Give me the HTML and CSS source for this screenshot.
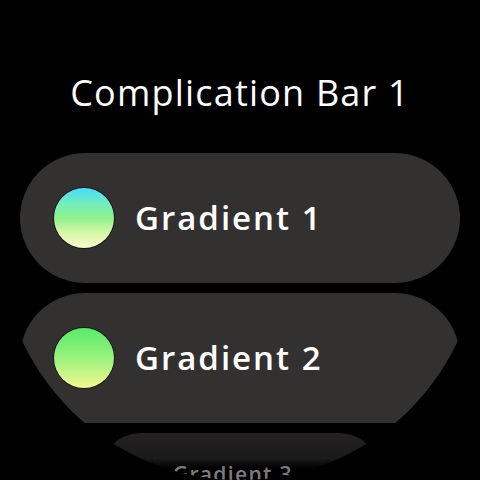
FILE: index.html
```html
<!DOCTYPE html>
<html>
<head>
<meta charset="utf-8">
<link rel="stylesheet" href="styles.css">
</head>
<body>
<div class="screen">
  <h1 class="title">Complication Bar 1</h1>
  <div class="list">
    <div class="chip">
      <span class="swatch swatch-1"></span>
      <span class="label">Gradient 1</span>
    </div>
    <div class="chip">
      <span class="swatch swatch-2"></span>
      <span class="label">Gradient 2</span>
    </div>
    <div class="chip chip-far">
      <span class="swatch swatch-3"></span>
      <span class="label">Gradient 3</span>
    </div>
  </div>
</div>
</body>
</html>
```
FILE: styles.css
```css
html, body {
  margin: 0;
  padding: 0;
  background: #000;
}
.screen {
  width: 480px;
  height: 480px;
  overflow: hidden;
  background: #000;
  clip-path: circle(240px at 240px 240px);
  font-family: "Open Sans", Roboto, "Liberation Sans", sans-serif;
  color: #fff;
}
.title {
  margin: 0;
  padding-top: 71px;
  height: 44px;
  line-height: 44px;
  font-size: 36px;
  font-weight: 400;
  text-align: center;
  letter-spacing: 1.2px;
}
.list {
  display: flex;
  flex-direction: column;
  gap: 10px;
  padding: 38px 20px 0;
}
.chip {
  flex: none;
  height: 130px;
  border-radius: 65px;
  background: #333130;
  display: flex;
  align-items: center;
  padding-left: 34px;
  gap: 21px;
}
.swatch {
  flex: none;
  width: 60px;
  height: 60px;
  border-radius: 50%;
  box-shadow: 0 0 0 1px rgba(0,0,0,0.5);
}
.swatch-1 {
  background: linear-gradient(to bottom, #44dcff 0%, #72ecc0 25%, #8ff08a 50%, #d6f8a8 75%, #fbfccc 100%);
}
.swatch-2 {
  background: linear-gradient(to bottom, #55ec6a 0%, #9af27c 50%, #f2f98f 100%);
}
.swatch-3 {
  background: linear-gradient(to bottom, #55ec6a 0%, #f2f98f 100%);
  opacity: 0;
}
.label {
  font-size: 33px;
  font-weight: 600;
  letter-spacing: 2px;
  color: #fff;
  padding-bottom: 2px;
}
.chip-far {
  transform: scale(0.64);
  transform-origin: center top;
  background: linear-gradient(to bottom, #232121 0px, #1c1b1b 40px, #000 56px);
}
.chip-far .label {
  color: #7c7c7c;
}
```
